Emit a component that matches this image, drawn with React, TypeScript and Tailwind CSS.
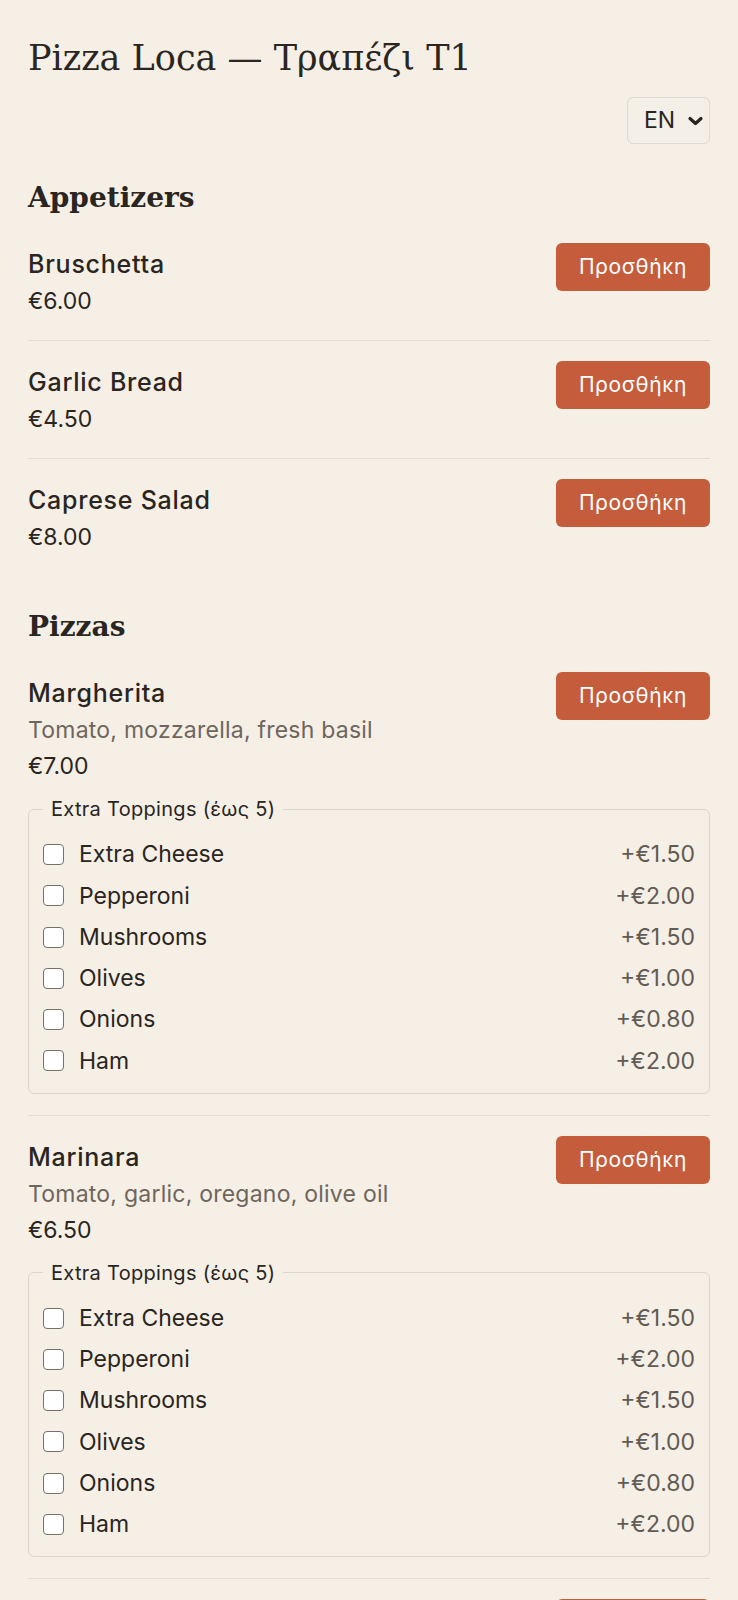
import React from 'react';

type Item = {
  name: string;
  desc?: string;
  price: string;
  toppings?: boolean;
};

const toppings = [
  { name: 'Extra Cheese', price: '+€1.50' },
  { name: 'Pepperoni', price: '+€2.00' },
  { name: 'Mushrooms', price: '+€1.50' },
  { name: 'Olives', price: '+€1.00' },
  { name: 'Onions', price: '+€0.80' },
  { name: 'Ham', price: '+€2.00' },
];

const sections: { title: string; items: Item[] }[] = [
  {
    title: 'Appetizers',
    items: [
      { name: 'Bruschetta', price: '€6.00' },
      { name: 'Garlic Bread', price: '€4.50' },
      { name: 'Caprese Salad', price: '€8.00' },
    ],
  },
  {
    title: 'Pizzas',
    items: [
      { name: 'Margherita', desc: 'Tomato, mozzarella, fresh basil', price: '€7.00', toppings: true },
      { name: 'Marinara', desc: 'Tomato, garlic, oregano, olive oil', price: '€6.50', toppings: true },
      { name: 'Quattro Formaggi', desc: 'Mozzarella, gorgonzola, parmesan, fontina', price: '€9.50', toppings: true },
    ],
  },
];

function Toppings() {
  return (
    <fieldset className="mt-[12px] border border-[#ddd6cb] rounded-[6px] px-[14px] pt-[11px] pb-[11px]">
      <legend className="px-2 text-[20px] leading-[28px] tracking-[0.015em] text-[#2a2520]">Extra Toppings (έως 5)</legend>
      {toppings.map((t) => (
        <label key={t.name} className="flex items-center h-[41.25px] gap-[15px] cursor-pointer">
          <input
            type="checkbox"
            className="appearance-none w-[21px] h-[21px] rounded-[4px] border-[1.5px] border-[#77716a] bg-white shrink-0"
          />
          <span className="text-[23px] text-[#2a2520]">{t.name}</span>
          <span className="ml-auto text-[23px] text-[#625b53]">{t.price}</span>
        </label>
      ))}
    </fieldset>
  );
}

function MenuRow({ item, last }: { item: Item; last: boolean }) {
  return (
    <div
      className={`pt-5 ${item.toppings ? 'pb-[21px]' : 'pb-[22px]'} ${last ? '' : 'border-b border-[#e2dcd2]'}`}
    >
      <div className="flex items-start justify-between gap-4">
        <div className="flex flex-col gap-[2px]">
          <div className="mt-[3px] text-[25px] leading-[36px] tracking-[0.03em] font-medium text-[#2a2520]">
            {item.name}
          </div>
          {item.desc && (
            <div className="text-[23px] leading-[34px] tracking-[0.01em] text-[#6e665d]">{item.desc}</div>
          )}
          <div className="text-[23px] leading-[34px] text-[#2a2520]">{item.price}</div>
        </div>
        <button className="h-[48px] px-[23px] rounded-[6px] bg-[#c55d3c] text-white text-[21px] tracking-[0.03em] shrink-0">
          Προσθήκη
        </button>
      </div>
      {item.toppings && <Toppings />}
    </div>
  );
}

export default function App() {
  return (
    <div className="min-h-screen bg-[#f5efe6] px-7 pt-[37px] pb-10 font-['Inter','Noto_Sans',sans-serif] text-[#2a2520]">
      <h1 className="font-['DejaVu_Serif',serif] text-[35px] leading-[42px] font-normal">Pizza Loca — Τραπέζι Τ1</h1>
      <div className="mt-[18px] flex justify-end">
        <div className="w-[83px] h-[47px] flex items-center justify-between pl-4 pr-[5px] border border-[#e0d9ce] rounded-[6px] bg-[#f4efe7]">
          <span className="text-[23px]">EN</span>
          <svg width="17" height="12" viewBox="0 0 17 12" fill="none">
            <polyline points="3,3.5 8.5,8.5 14,3.5" stroke="#2a2520" strokeWidth="3.2" strokeLinecap="round" strokeLinejoin="round" />
          </svg>
        </div>
      </div>
      {sections.map((s, si) => (
        <section key={s.title} className={si === 0 ? 'mt-[37px]' : 'mt-[34px]'}>
          <h2 className="font-['DejaVu_Serif',serif] text-[28px] leading-[34px] font-bold mb-2">{s.title}</h2>
          {s.items.map((item, i) => (
            <MenuRow key={item.name} item={item} last={i === s.items.length - 1} />
          ))}
        </section>
      ))}
    </div>
  );
}
